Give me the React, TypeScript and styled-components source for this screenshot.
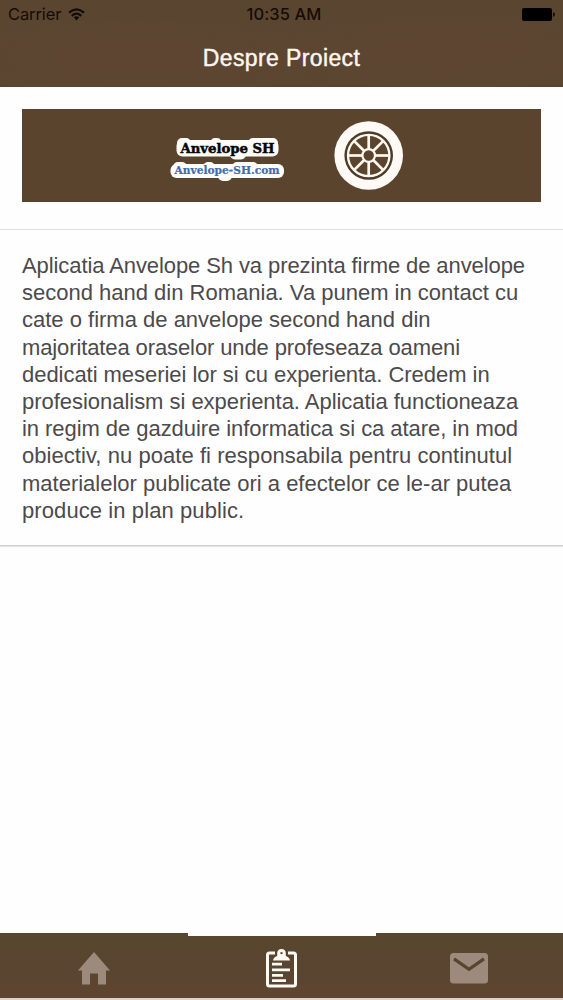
import React from "react";
import styled, { createGlobalStyle } from "styled-components";

const GlobalStyle = createGlobalStyle`
  * { box-sizing: border-box; }
  body { margin: 0; background: #fefefe; font-family: "Liberation Sans", Arial, sans-serif; }
`;

const Screen = styled.div`
  width: 563px;
  height: 1000px;
  display: flex;
  flex-direction: column;
  overflow: hidden;
  background: #fefefe;
`;

const Header = styled.header`
  height: 87px;
  flex: none;
  background: radial-gradient(ellipse 230px 42px at 140px 58px, #5e4532, transparent),
    radial-gradient(ellipse 200px 42px at 450px 52px, #5e4532, transparent), #5a4630;
`;

const StatusBar = styled.div`
  height: 29px;
  padding: 0 8px;
  display: grid;
  grid-template-columns: 238.5px auto 1fr;
  align-items: center;
  color: #160b06;
  font: 16.5px/29px Inter, Roboto, sans-serif;
`;

const Carrier = styled.div`
  display: flex;
  align-items: center;
  gap: 7px;
  letter-spacing: -0.1px;
`;

const Clock = styled.div`
  font-weight: 500;
  letter-spacing: 0.1px;
`;

const BatterySlot = styled.div`
  display: flex;
  justify-content: flex-end;
`;

const Title = styled.h1`
  margin: 0;
  height: 58px;
  color: #fdf6ee;
  font: 500 23px/58px "Liberation Sans", sans-serif;
  text-align: center;
  letter-spacing: 0.38px;
  -webkit-text-stroke: 0.45px #fdf6ee;
`;

const Card = styled.section`
  height: 459px;
  flex: none;
  border-bottom: 1px solid #cfcfcf;
  box-shadow: 0 1px 1px #e4e4e4;
  background: #fefefe;
`;

const BannerArea = styled.div`
  height: 143px;
  padding: 22px 22px 0;
  border-bottom: 1px solid #dedede;
`;

const Banner = styled.svg`
  display: block;
  width: 519px;
  height: 93px;
  background: #5a442d;
`;

const About = styled.p`
  margin: 0;
  padding: 22px 22px 0;
  color: #4c4a4c;
  font-size: 22px;
  line-height: 27.2px;
`;

const Line = styled.span<{ $spacing: number }>`
  display: block;
  white-space: nowrap;
  letter-spacing: ${(p) => p.$spacing}px;
`;

const Tabs = styled.nav`
  height: 67px;
  margin-top: auto;
  display: grid;
  grid-template-columns: 188px 188px 187px;
  background: linear-gradient(#58462e, #5a4530 60%, #5f4530);
  border-bottom: 2px solid #ddd2ca;
`;

const Tab = styled.button<{ $active?: boolean }>`
  border: 0;
  border-top: 3px solid ${(p) => (p.$active ? "#fefefe" : "transparent")};
  padding: 3px 0 0;
  display: flex;
  align-items: center;
  justify-content: center;
  background: none;
  color: ${(p) => (p.$active ? "#fefaf4" : "#9c8b7d")};

  &:not(:first-child) {
    padding-right: 1px;
  }
`;

const lines: [string, number][] = [
  ["Aplicatia Anvelope Sh va prezinta firme de anvelope", -0.09],
  ["second hand din Romania. Va punem in contact cu", 0],
  ["cate o firma de anvelope second hand din", 0],
  ["majoritatea oraselor unde profeseaza oameni", -0.11],
  ["dedicati meseriei lor si cu experienta. Credem in", -0.04],
  ["profesionalism si experienta. Aplicatia functioneaza", -0.03],
  ["in regim de gazduire informatica si ca atare, in mod", -0.055],
  ["obiectiv, nu poate fi responsabila pentru continutul", 0.05],
  ["materialelor publicate ori a efectelor ce le-ar putea", 0],
  ["produce in plan public.", 0.09],
];

const WifiIcon = () => (
  <svg width="17" height="13" viewBox="0 0 17 13" fill="none" stroke="currentColor" strokeWidth="2.2">
    <path d="M1 4.7Q8.5-1.9 16 4.7M3.7 7.8Q8.5 3.6 13.3 7.8" />
    <path d="M5.7 9.3Q8.5 7 11.3 9.3L8.5 12.4Z" fill="currentColor" stroke="none" />
  </svg>
);

const BatteryIcon = () => (
  <svg width="33" height="14" viewBox="0 0 33 14">
    <rect width="30" height="13" rx="2" fill="#000" />
    <path d="M31 4q2 1 2 2.5t-2 2.5z" fill="#160b06" />
  </svg>
);

const spokes = [0, 45, 90, 135, 180, 225, 270, 315];

const Logo = () => (
  <Banner viewBox="0 0 519 93">
    <g fill="#fffdfa">
      <rect x="154.5" y="31" width="102" height="16.5" rx="6" />
      <rect x="155" y="29" width="14" height="14" rx="5" />
      <rect x="189" y="29" width="10" height="10" rx="4" />
      <rect x="226" y="29" width="30" height="14" rx="5" />
      <rect x="208" y="36" width="16" height="14.5" rx="5" />
      <rect x="148.5" y="55" width="113.5" height="14" rx="6" />
      <rect x="151" y="53" width="14" height="12" rx="5" />
      <rect x="181" y="53" width="12" height="12" rx="5" />
      <rect x="210" y="53" width="26" height="12" rx="5" />
      <rect x="196" y="60" width="14" height="12" rx="5" />
    </g>
    <g fontFamily="'DejaVu Serif', serif" fontWeight="700" strokeWidth="0.5">
      <text x="158.5" y="43.5" fontSize="13.5" textLength="94" lengthAdjust="spacingAndGlyphs" fill="#080808" stroke="#080808">
        Anvelope SH
      </text>
      <text x="152.5" y="65" fontSize="11" textLength="105" lengthAdjust="spacingAndGlyphs" fill="#426bae" stroke="#426bae" strokeWidth="0.2">
        Anvelope-SH.com
      </text>
    </g>
    <g transform="translate(346.7 46.5)">
      <circle r="34.3" fill="#fffaf5" />
      <circle r="24.3" fill="#4b3c2a" />
      <circle r="20.7" fill="#5a442d" stroke="#fff8ef" strokeWidth="2.3" />
      {spokes.map((a) => (
        <path key={a} d="M0-6V-20" transform={`rotate(${a})`} stroke="#fff8ef" strokeWidth="2.7" />
      ))}
      <circle r="6.3" fill="#5a442d" stroke="#fff8ef" strokeWidth="2.2" />
    </g>
  </Banner>
);

const HomeIcon = () => (
  <svg width="32" height="33" viewBox="0 0 32 33" fill="currentColor">
    <path d="M16 0 32 18.5H28V32.5H20V21.5H12V32.5H4V18.5H0Z" />
  </svg>
);

const ClipboardIcon = () => (
  <svg width="31" height="39" viewBox="0 0 31 39" fill="none" stroke="currentColor">
    <path d="M9 4H3.5Q1.5 4 1.5 6V35Q1.5 37 3.5 37H27.5Q29.5 37 29.5 35V6Q29.5 4 27.5 4H22" strokeWidth="3" />
    <path
      d="M7 11.5Q7.5 8 11.2 7V4.5Q11.2 0 15.5 0T19.8 4.5V7Q23.5 8 24 11.5ZM15.5 2.9A1.2 1.2 0 1 0 15.5 5.3 1.2 1.2 0 1 0 15.5 2.9"
      fill="currentColor"
      fillRule="evenodd"
      stroke="none"
    />
    <path d="M6 15.2H16M6 20.8H24M6 26.3H17M6 31.7H20" strokeWidth="2.7" />
  </svg>
);

const MailIcon = () => (
  <svg width="38" height="31" viewBox="0 0 38 31">
    <rect width="38" height="30.5" rx="3.5" fill="currentColor" />
    <path d="M4 5.8 19 16.3 34 5.8" fill="none" stroke="#59442f" strokeWidth="3.3" />
  </svg>
);

export default function App() {
  return (
    <Screen>
      <GlobalStyle />
      <Header>
        <StatusBar>
          <Carrier>Carrier <WifiIcon /></Carrier>
          <Clock>10:35 AM</Clock>
          <BatterySlot><BatteryIcon /></BatterySlot>
        </StatusBar>
        <Title>Despre Proiect</Title>
      </Header>
      <Card>
        <BannerArea><Logo /></BannerArea>
        <About>
          {lines.map(([text, spacing]) => (
            <Line key={text} $spacing={spacing}>{text}</Line>
          ))}
        </About>
      </Card>
      <Tabs>
        <Tab aria-label="Home"><HomeIcon /></Tab>
        <Tab aria-label="Despre" $active><ClipboardIcon /></Tab>
        <Tab aria-label="Contact"><MailIcon /></Tab>
      </Tabs>
    </Screen>
  );
}
